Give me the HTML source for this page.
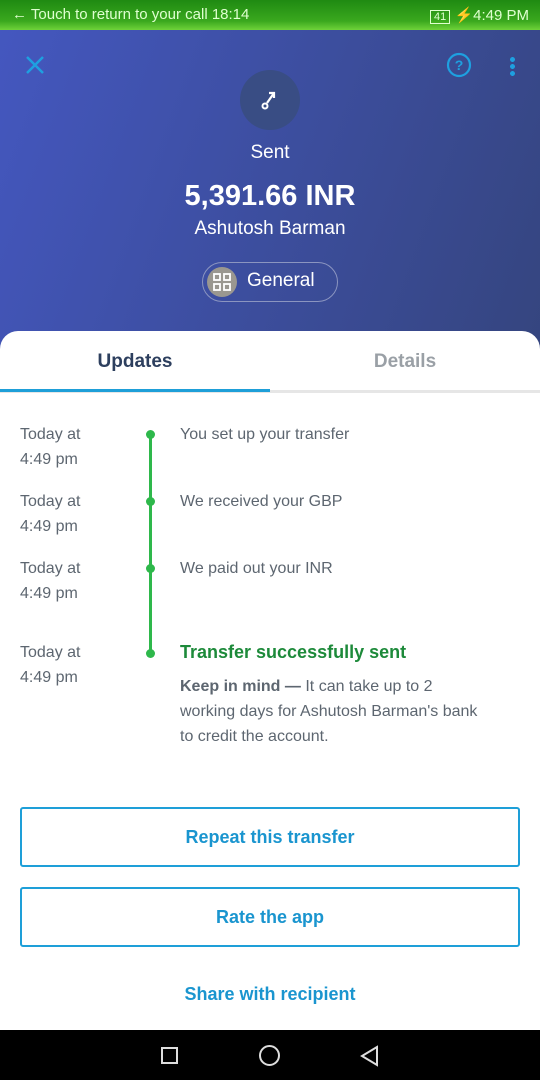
<!DOCTYPE html>
<html><head><meta charset="utf-8"><style>
*{margin:0;padding:0;box-sizing:border-box}
body{width:540px;height:1080px;overflow:hidden;font-family:"Liberation Sans",sans-serif;background:#fff;position:relative}
.sb{position:absolute;top:0;left:0;width:540px;height:30px;background:linear-gradient(180deg,#1f8a12,#3aa81e 70%,#6fd23a);color:#dfffd0;font-size:15px}
.hdr{position:absolute;top:30px;left:0;width:540px;height:320px;background:linear-gradient(110deg,#4457bf,#35457f)}
.t{position:absolute;width:540px;text-align:center;color:#fff}
.card{position:absolute;top:331px;left:0;width:540px;height:700px;background:#fff;border-radius:18px 18px 0 0}
.time{position:absolute;left:20px;color:#5d6670;font-size:16px;line-height:25px}
.ev{position:absolute;left:180px;color:#5d6670;font-size:16px;line-height:25px}
.dot{position:absolute;left:146px;width:9px;height:9px;border-radius:50%;background:#2eb84b}
.btn{position:absolute;left:20px;width:500px;height:60px;border:2px solid #1e9fd8;border-radius:3px;color:#1a95cf;font-size:18px;font-weight:bold;text-align:center;line-height:56px}
.nav{position:absolute;top:1030px;left:0;width:540px;height:50px;background:#000}
</style></head><body>
<div class="sb"><span style="position:absolute;left:12px;top:6px">← Touch to return to your call 18:14</span>
<span style="position:absolute;right:11px;top:6px"><span style="border:1px solid #dfffd0;font-size:11px;padding:0 3px">41</span> ⚡4:49 PM</span></div>
<div class="hdr">
<svg style="position:absolute;left:25px;top:25px" width="20" height="20"><path d="M2 2L18 18M18 2L2 18" stroke="#1ea0e0" stroke-width="2.5"/></svg>
<svg style="position:absolute;left:446px;top:22px" width="26" height="26"><circle cx="13" cy="13" r="11" fill="none" stroke="#1ea0e0" stroke-width="2.2"/><text x="13" y="18" text-anchor="middle" fill="#1ea0e0" font-size="14" font-weight="bold" font-family="Liberation Sans">?</text></svg>
<div style="position:absolute;left:510px;top:26px;width:5px;height:20px;background:radial-gradient(circle,#1ea0e0 2.3px,transparent 2.6px) 0 0/5px 7px"></div>
<div style="position:absolute;left:240px;top:40px;width:60px;height:60px;border-radius:50%;background:#394d84"></div>
<svg style="position:absolute;left:256px;top:56px" width="28" height="28"><circle cx="9" cy="20" r="2.5" fill="none" stroke="#fff" stroke-width="2"/><path d="M11 17L18 7M13 7H18V12" fill="none" stroke="#fff" stroke-width="2.2"/></svg>
<div class="t" style="top:112px;font-size:19px">Sent</div>
<div class="t" style="top:150px;font-size:29px;font-weight:bold">5,391.66 INR</div>
<div class="t" style="top:188px;font-size:19px">Ashutosh Barman</div>
<div style="position:absolute;left:202px;top:232px;width:136px;height:40px;border:1.5px solid #8b95c0;border-radius:20px"></div>
<div style="position:absolute;left:207px;top:237px;width:30px;height:30px;border-radius:50%;background:#9a9790"></div>
<svg style="position:absolute;left:211px;top:241px" width="22" height="22"><g fill="none" stroke="#fff" stroke-width="1.8"><rect x="3" y="3" width="6" height="6"/><rect x="13" y="3" width="6" height="6"/><rect x="3" y="13" width="6" height="6"/><rect x="13" y="13" width="6" height="6"/></g></svg>
<div style="position:absolute;left:247px;top:240px;color:#fff;font-size:19px">General</div>
</div>
<div class="card">
<div style="position:absolute;left:0;width:270px;top:20px;text-align:center;color:#2d3f5e;font-size:19px;font-weight:bold">Updates</div>
<div style="position:absolute;left:270px;width:270px;top:20px;text-align:center;color:#9aa0a6;font-size:19px;font-weight:bold">Details</div>
<div style="position:absolute;top:59px;left:0;width:540px;height:3px;background:#e6e6e6"></div>
<div style="position:absolute;top:58px;left:0;width:270px;height:3px;background:#1e9fd8"></div>
</div>
<div style="position:absolute;left:149px;top:433px;width:3px;height:220px;background:#2eb84b"></div>
<div class="dot" style="top:430px"></div><div class="dot" style="top:497px"></div><div class="dot" style="top:564px"></div><div class="dot" style="top:649px"></div>
<div class="time" style="top:422px">Today at<br>4:49 pm</div>
<div class="time" style="top:489px">Today at<br>4:49 pm</div>
<div class="time" style="top:556px">Today at<br>4:49 pm</div>
<div class="time" style="top:640px">Today at<br>4:49 pm</div>
<div class="ev" style="top:422px">You set up your transfer</div>
<div class="ev" style="top:489px">We received your GBP</div>
<div class="ev" style="top:556px">We paid out your INR</div>
<div class="ev" style="top:640px;color:#1d8a3a;font-weight:bold;font-size:18px">Transfer successfully sent</div>
<div class="ev" style="top:674px;width:340px"><b>Keep in mind —</b> It can take up to 2<br>working days for Ashutosh Barman's bank<br>to credit the account.</div>
<div class="btn" style="top:807px">Repeat this transfer</div>
<div class="btn" style="top:887px">Rate the app</div>
<div style="position:absolute;top:984px;width:540px;text-align:center;color:#1a95cf;font-size:18px;font-weight:bold">Share with recipient</div>
<div class="nav">
<div style="position:absolute;left:161px;top:17px;width:17px;height:17px;border:2px solid #ddd"></div>
<div style="position:absolute;left:259px;top:15px;width:21px;height:21px;border:2px solid #ddd;border-radius:50%"></div>
<svg style="position:absolute;left:359px;top:15px" width="22" height="22"><path d="M18 2L3 11L18 20Z" fill="none" stroke="#ddd" stroke-width="2"/></svg>
</div>
</body></html>
